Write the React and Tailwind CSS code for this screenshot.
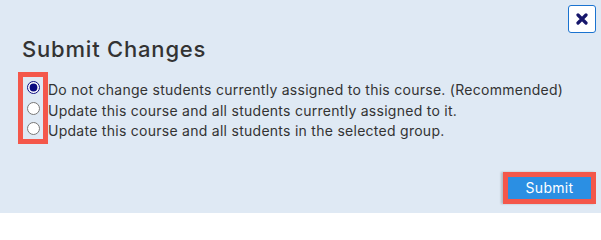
import React, { useState } from "react";

const options = [
  "Do not change students currently assigned to this course. (Recommended)",
  "Update this course and all students currently assigned to it.",
  "Update this course and all students in the selected group.",
];

export default function App() {
  const [choice, setChoice] = useState(0);

  return (
    <div className="w-[601px] h-[213px] bg-[#dfe9f4] flex flex-col font-['Inter',sans-serif] text-[#333333]">
      <div className="flex justify-end pt-[5px] pr-[5px]">
        <button className="w-[28px] h-[28px] bg-white border border-[#1a73d0] rounded-[3px] flex items-center justify-center">
          <svg width="12" height="12" viewBox="0 0 12 12">
            <path d="M2 2 L10 10 M10 2 L2 10" stroke="#16166b" strokeWidth="3.2" strokeLinecap="round" />
          </svg>
        </button>
      </div>

      <h2 className="pl-[22px] mt-[2px] text-[22px] leading-[28px] font-medium tracking-[0.8px] text-[#333333]">Submit Changes</h2>

      <div className="flex mt-[9px] pl-[18px]">
        <div className="flex flex-col border-[5px] border-[#f4574a] px-[4px] w-[30px]">
          {options.map((opt, i) => (
            <div key={i} className="h-[20.7px] flex items-center">
              <input
                type="radio"
                name="submit-mode"
                checked={choice === i}
                onChange={() => setChoice(i)}
                className="w-[13px] h-[13px] m-0 accent-[#0a0a80]"
              />
            </div>
          ))}
        </div>
        <div className="flex flex-col pt-[7px]">
          {options.map((opt, i) => (
            <label key={i} onClick={() => setChoice(i)} className="h-[20.7px] flex items-center text-[14px] tracking-[0.27px] text-[#333333]">
              {opt}
            </label>
          ))}
        </div>
      </div>

      <div className="flex justify-end mt-auto pr-[5px] pb-[9px]">
        <div className="border-[5px] border-[#f4574a] shadow-[-2px_0_2px_rgba(0,0,0,0.2)]">
          <button className="w-[83px] h-[22px] bg-[#2b8fe3] text-white text-[14px] tracking-[0.3px] leading-[22px] flex items-center justify-center">
            Submit
          </button>
        </div>
      </div>
    </div>
  );
}
